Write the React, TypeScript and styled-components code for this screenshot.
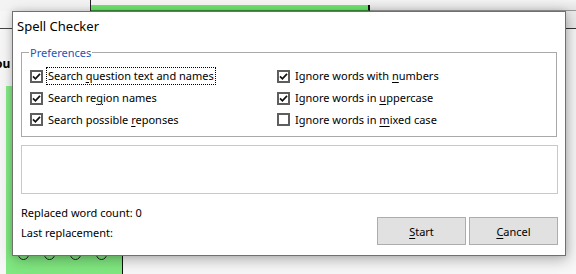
import styled, { createGlobalStyle } from "styled-components";

const GlobalStyle = createGlobalStyle`
  html, body {
    margin: 0;
    padding: 0;
    background: #f4f4f4;
  }
  body {
    font-family: "Noto Sans", "DejaVu Sans", sans-serif;
    font-size: 11px;
    color: #000;
  }
`;

const Desktop = styled.div`
  position: relative;
  width: 576px;
  height: 274px;
  overflow: hidden;
  background: #f4f4f4;
`;

// ---- background application (partly hidden behind the dialog) ----

const TopBar = styled.div`
  display: flex;
  height: 11px;
`;

const TopLeft = styled.div`
  width: 90px;
  background: #f3f3f3;
  border-right: 1px solid #222;
`;

const Progress = styled.div`
  width: 277px;
  align-self: flex-end;
  height: 5px;
  background: #6de46d;
  border-bottom: 1px solid #3d8f3d;
  border-right: 2px solid #111;
`;

const TopRest = styled.div`
  flex: 1;
  background: linear-gradient(#f2f2f2, #e4e4e4);
  border-bottom: 1px solid #9a9a9a;
`;

const Main = styled.div`
  display: flex;
  height: 263px;
`;

const LeftPane = styled.div`
  width: 122px;
  display: flex;
  flex-direction: column;
  border-right: 1px solid #111;
  background: #f7f7f7;
`;

const PaneHeader = styled.div`
  height: 17px;
  border-bottom: 1px solid #444;
  flex-shrink: 0;
`;

const PaneLabel = styled.div`
  height: 57px;
  padding-top: 26px;
  box-sizing: border-box;
  font-weight: bold;
  font-size: 12px;
  flex-shrink: 0;
  margin-left: -5px;
`;

const GreenPanel = styled.div`
  flex: 1;
  margin-left: 6px;
  background: linear-gradient(#86ec86, #80e880);
  display: flex;
  align-items: flex-end;
  gap: 15px;
  padding: 0 0 14px 12px;
`;

const Dot = styled.span`
  width: 9px;
  height: 9px;
  border: 1px solid #222;
  border-radius: 50%;
  flex-shrink: 0;
`;

const RightPane = styled.div`
  flex: 1;
  background: #f8f8f8;
`;

const RightHeader = styled.div`
  height: 17px;
  border-bottom: 1px solid #333;
  background: #ececec;
`;

// ---- dialog ----

const Dialog = styled.div`
  position: absolute;
  left: 12px;
  top: 11px;
  width: 554px;
  height: 245px;
  box-sizing: border-box;
  background: #fff;
  border: 1px solid #707070;
  box-shadow: 2px 4px 14px rgba(0, 0, 0, 0.28), 0 0 6px rgba(0, 0, 0, 0.12);
  display: flex;
  flex-direction: column;
`;

const TitleBar = styled.div`
  height: 27px;
  display: flex;
  align-items: center;
  padding-left: 4px;
  font-size: 13px;
  flex-shrink: 0;
`;

const Body = styled.div`
  flex: 1;
  display: flex;
  flex-direction: column;
  padding: 6px 7px 9px 8px;
`;

const GroupBox = styled.fieldset`
  margin: 0 1px 0 0;
  padding: 5px 8px 6px 8px;
  border: 1px solid #a9a9a9;
  border-radius: 0;
  display: grid;
  grid-template-columns: 247px auto;
  grid-auto-flow: column;
  grid-template-rows: 22px 22px 21px;
`;

const Legend = styled.legend`
  padding: 0 1px;
  margin-left: -1px;
  color: #1a56b8;
  font-size: 11px;
  line-height: 15px;
`;

const CheckRow = styled.label`
  display: flex;
  align-items: center;
  gap: 4px;
  white-space: nowrap;
`;

const Box = styled.span<{ $checked: boolean }>`
  width: 13px;
  height: 13px;
  box-sizing: border-box;
  border: 2px solid #5e5e5e;
  background: #fff;
  display: flex;
  align-items: center;
  justify-content: center;
  flex-shrink: 0;
  svg {
    visibility: ${(p) => (p.$checked ? "visible" : "hidden")};
  }
`;

const LabelText = styled.span<{ $focused?: boolean }>`
  padding: 1px 1px;
  line-height: 14px;
  outline: ${(p) => (p.$focused ? "1px dotted #000" : "none")};
`;

const Key = styled.span`
  text-decoration: underline;
  text-underline-offset: 2px;
`;

const TextArea = styled.div`
  margin-top: 8px;
  height: 49px;
  box-sizing: border-box;
  border: 1px solid #c9c9c9;
`;

const Footer = styled.div`
  flex: 1;
  display: flex;
  justify-content: space-between;
  align-items: flex-end;
`;

const Info = styled.div`
  display: flex;
  flex-direction: column;
  gap: 5px;
  line-height: 15px;
  padding-bottom: 6px;
`;

const Buttons = styled.div`
  display: flex;
  gap: 3px;
  padding-bottom: 1px;
`;

const Button = styled.button`
  width: 89px;
  height: 28px;
  box-sizing: border-box;
  background: #e1e1e1;
  border: 1px solid #adadad;
  font-family: inherit;
  font-size: 11px;
  color: #000;
  padding: 0;
`;

const Check = () => (
  <svg width="9" height="9" viewBox="0 0 9 9">
    <path d="M1 4.4 L3.4 6.8 L8 1.8" fill="none" stroke="#111" strokeWidth="1.7" />
  </svg>
);

type Opt = { before: string; key: string; after: string; checked: boolean; focused?: boolean };

const options: Opt[] = [
  { before: "Search ", key: "q", after: "uestion text and names", checked: true, focused: true },
  { before: "Search re", key: "g", after: "ion names", checked: true },
  { before: "Search possible ", key: "r", after: "eponses", checked: true },
  { before: "Ignore words with ", key: "n", after: "umbers", checked: true },
  { before: "Ignore words in ", key: "u", after: "ppercase", checked: true },
  { before: "Ignore words in ", key: "m", after: "ixed case", checked: false },
];

export default function App() {
  return (
    <Desktop>
      <GlobalStyle />
      <TopBar>
        <TopLeft />
        <Progress />
        <TopRest />
      </TopBar>
      <Main>
        <LeftPane>
          <PaneHeader />
          <PaneLabel>ou</PaneLabel>
          <GreenPanel>
            <Dot />
            <Dot />
            <Dot />
            <Dot />
          </GreenPanel>
        </LeftPane>
        <RightPane>
          <RightHeader />
        </RightPane>
      </Main>

      <Dialog>
        <TitleBar>Spell Checker</TitleBar>
        <Body>
          <GroupBox>
            <Legend>Preferences</Legend>
            {options.map((o, i) => (
              <CheckRow key={i}>
                <Box $checked={o.checked}>
                  <Check />
                </Box>
                <LabelText $focused={o.focused}>
                  {o.before}
                  <Key>{o.key}</Key>
                  {o.after}
                </LabelText>
              </CheckRow>
            ))}
          </GroupBox>
          <TextArea />
          <Footer>
            <Info>
              <span>Replaced word count: 0</span>
              <span>Last replacement:</span>
            </Info>
            <Buttons>
              <Button>
                <Key>S</Key>tart
              </Button>
              <Button>
                <Key>C</Key>ancel
              </Button>
            </Buttons>
          </Footer>
        </Body>
      </Dialog>
    </Desktop>
  );
}
